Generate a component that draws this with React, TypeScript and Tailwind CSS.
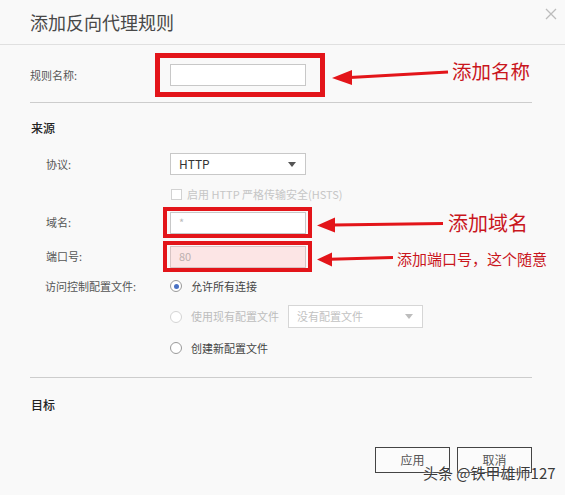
import React from 'react'

function Radio({ checked, disabled }: { checked?: boolean; disabled?: boolean }) {
  return (
    <span
      className={
        disabled
          ? 'w-[12px] h-[12px] rounded-full border border-[#d4d4d4] bg-white flex items-center justify-center'
          : 'w-[12px] h-[12px] rounded-full border border-[#9a9a9a] bg-white flex items-center justify-center'
      }
    >
      {checked && <span className="w-[5px] h-[5px] rounded-full bg-[#4a72c4]" />}
    </span>
  )
}

function Caret({ light }: { light?: boolean }) {
  return (
    <svg width="8" height="5" viewBox="0 0 8 5">
      <polygon points="0,0 8,0 4,5" fill={light ? '#bdbdbd' : '#555'} />
    </svg>
  )
}

export default function App() {
  return (
    <div className="relative w-[565px] h-[495px] overflow-hidden bg-[#f9f9f9] text-[#555] font-['Noto_Sans_CJK_SC',sans-serif]">
      {/* header */}
      <div className="relative h-[45px] border-b border-[#e0e0e0] flex items-center pl-[30px]">
        <h1 className="text-[18px] leading-none text-[#484848]">添加反向代理规则</h1>
        <svg className="absolute left-[545px] top-[8px]" width="12" height="12" viewBox="0 0 12 12">
          <path d="M1 1 L11 11 M11 1 L1 11" stroke="#bcbcbc" strokeWidth="1.3" />
        </svg>
      </div>

      {/* rule name */}
      <div className="ml-[30px] w-[502px] h-[58px] pt-[3px] flex items-center border-b border-[#cdcdcd]">
        <span className="w-[125px] text-[11px] text-[#555]">规则名称:</span>
        <div className="w-[170px] h-[44px] border-[5px] border-[#e3151a] flex items-center pl-[10px]">
          <div className="w-[136px] h-[22px] border border-[#c8c8c8] bg-white" />
        </div>
        <svg className="ml-[7px]" width="118" height="24" viewBox="0 0 118 24">
          <polygon points="0,15 20,7 20,22" fill="#e3151a" />
          <path d="M18 14.5 L116 9" stroke="#e3151a" strokeWidth="3" />
        </svg>
        <span className="ml-[2px] mb-[8px] text-[19.5px] leading-none text-[#c9161d]">添加名称</span>
      </div>

      {/* source */}
      <div className="h-[50px] flex items-center pl-[31px] text-[12px] font-medium text-[#222]">来源</div>

      <div className="flex items-center h-[22px]">
        <span className="w-[170px] pl-[46px] text-[11px]">协议:</span>
        <div className="w-[136px] h-[22px] border border-[#c8c8c8] bg-white flex items-center justify-between pl-[8px] pr-[9px]">
          <span className="text-[12px] text-[#333]">HTTP</span>
          <Caret />
        </div>
      </div>

      <div className="mt-[9px] h-[20px] flex items-center pl-[171px]">
        <span className="w-[11px] h-[11px] border border-[#d2d2d2] bg-white" />
        <span className="ml-[5px] text-[11px] text-[#c6c6c6]">启用 HTTP 严格传输安全(HSTS)</span>
      </div>

      <div className="mt-[3px] h-[31px] flex items-center">
        <span className="w-[163px] pl-[46px] text-[11px]">域名:</span>
        <div className="w-[149px] h-[31px] border-[4px] border-[#e3151a] flex items-center pl-[3px]">
          <div className="w-[136px] h-[22px] border border-[#c8c8c8] bg-white flex items-center pl-[8px] text-[11px] text-[#bbb]">*</div>
        </div>
        <svg className="ml-[5px]" width="128" height="24" viewBox="0 0 128 24">
          <polygon points="0,14.5 18,6.5 18,21.5" fill="#e3151a" />
          <path d="M16 14 L126 12.5" stroke="#e3151a" strokeWidth="3" />
        </svg>
        <span className="ml-[3px] text-[20px] leading-none text-[#c9161d]">添加域名</span>
      </div>

      <div className="mt-[3px] h-[31px] flex items-center">
        <span className="w-[163px] pl-[46px] text-[11px]">端口号:</span>
        <div className="w-[149px] h-[31px] border-[4px] border-[#e3151a] flex items-center pl-[3px]">
          <div className="w-[136px] h-[22px] border border-[#d8c4c4] bg-[#fce5e5] flex items-center pl-[8px] text-[11px] text-[#bdb0b0]">80</div>
        </div>
        <svg className="ml-[5px]" width="76" height="22" viewBox="0 0 76 22">
          <polygon points="0,13.5 15,6.5 15,20.5" fill="#e3151a" />
          <path d="M13 13.2 L76 11.5" stroke="#e3151a" strokeWidth="3" />
        </svg>
        <span className="ml-[4px] mt-[3px] text-[15px] leading-none text-[#c9161d]">添加端口号，这个随意</span>
      </div>

      <div className="mt-[3px] h-[22px] flex items-center">
        <span className="w-[170px] pl-[45px] text-[11px]">访问控制配置文件:</span>
        <Radio checked />
        <span className="ml-[9px] text-[11px] text-[#444]">允许所有连接</span>
      </div>

      <div className="mt-[8px] h-[23px] flex items-center pl-[170px]">
        <Radio disabled />
        <span className="ml-[9px] text-[11px] text-[#bdbdbd]">使用现有配置文件</span>
        <div className="ml-[9px] w-[135px] h-[23px] border border-[#d6d6d6] bg-white flex items-center justify-between pl-[8px] pr-[9px]">
          <span className="text-[11px] text-[#c2c2c2]">没有配置文件</span>
          <Caret light />
        </div>
      </div>

      <div className="mt-[9px] h-[22px] flex items-center pl-[170px]">
        <Radio />
        <span className="ml-[9px] text-[11px] text-[#444]">创建新配置文件</span>
      </div>

      <div className="mt-[18px] ml-[30px] w-[502px] border-b border-[#cdcdcd]" />

      {/* target */}
      <div className="h-[54px] flex items-center pl-[31px] text-[12px] font-medium text-[#222]">目标</div>

      <div className="mt-[15px] w-[532px] flex justify-end gap-[7px]">
        <button className="w-[75px] h-[26px] border border-[#444] bg-[#fbfbfb] text-[12px] text-[#555]">应用</button>
        <button className="w-[75px] h-[26px] border border-[#444] bg-[#fbfbfb] text-[12px] text-[#555]">取消</button>
      </div>

      <span className="absolute left-[423px] top-[465px] text-[15px] leading-none text-[#3a3a3a] [text-shadow:0_0_2px_#fff]">
        头条 @铁甲雄师127
      </span>
    </div>
  )
}
